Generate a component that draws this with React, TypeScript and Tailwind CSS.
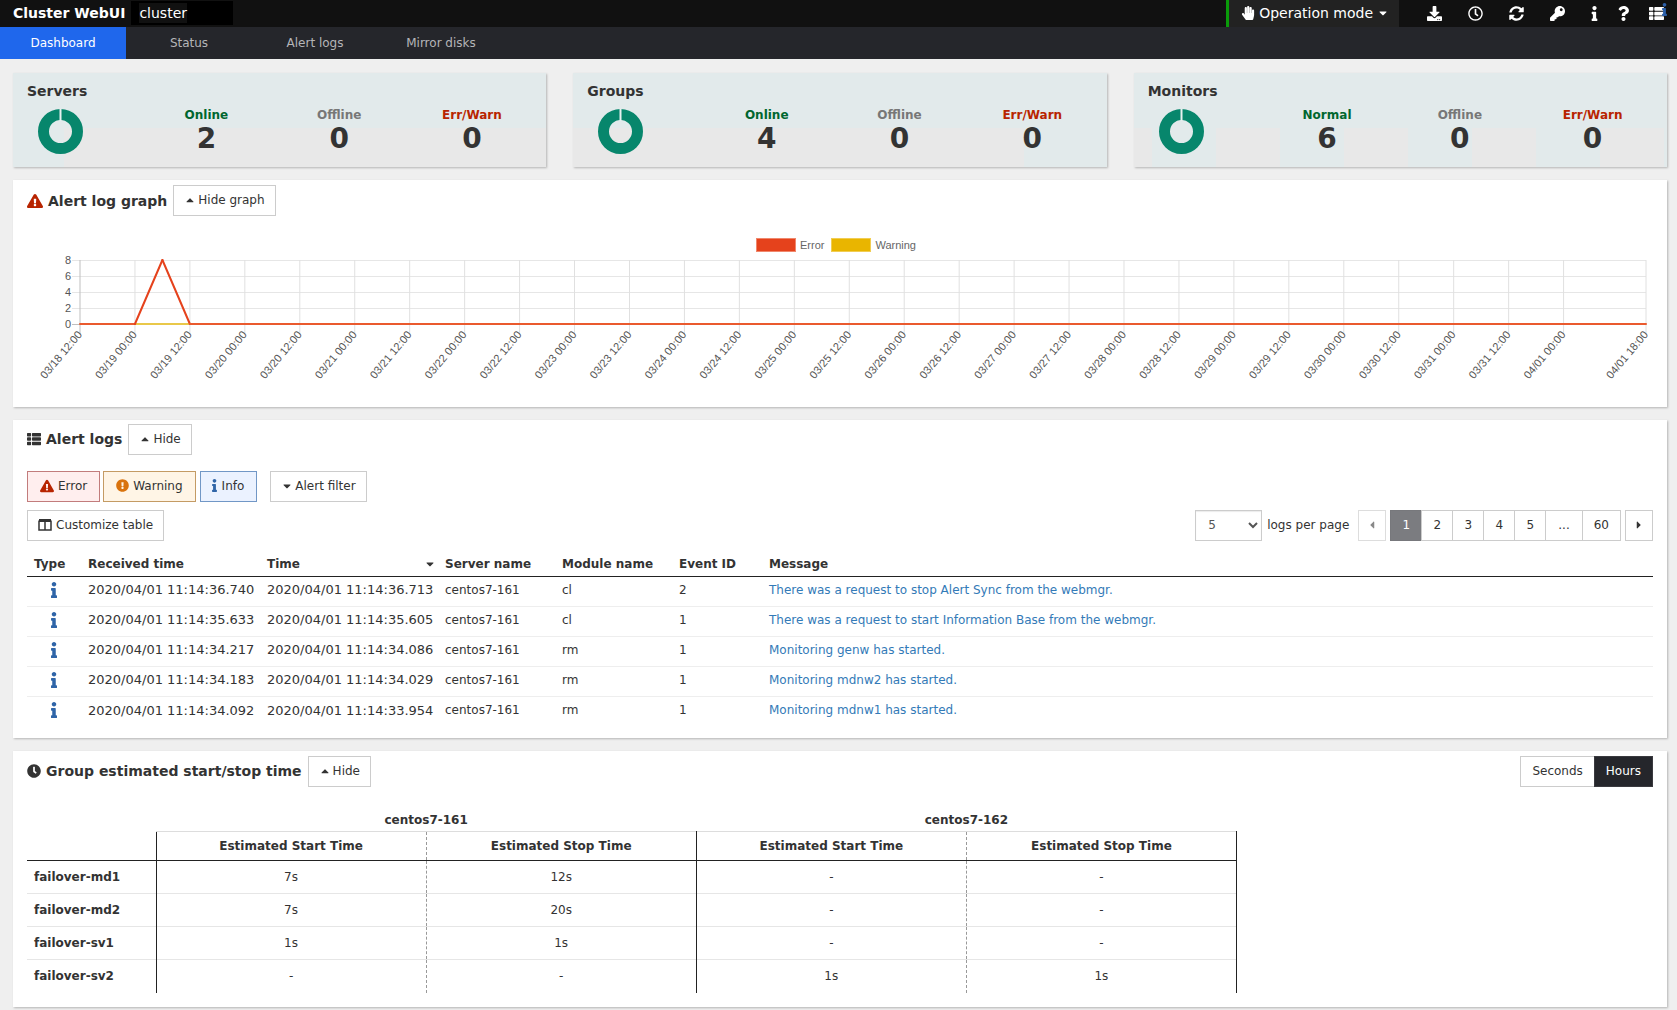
import type { ReactNode } from "react";
import {
  FaCaretDown,
  FaCaretLeft,
  FaCaretRight,
  FaCaretUp,
  FaClock,
  FaDownload,
  FaExclamationCircle,
  FaExclamationTriangle,
  FaHandPaper,
  FaInfo,
  FaKey,
  FaQuestion,
  FaRegClock,
  FaSyncAlt,
  FaThList,
} from "react-icons/fa";

type Stat = { label: string; value: number; tone: string };

type SummaryCardProps = {
  title: string;
  stats: ReadonlyArray<Stat>;
  surface: string;
};

type AlertRow = {
  received: string;
  time: string;
  server: string;
  module: string;
  eventId: number;
  message: string;
};

const tabs = ["Dashboard", "Status", "Alert logs", "Mirror disks"];

const summaries: SummaryCardProps[] = [
  {
    title: "Servers",
    surface:
      "bg-[#e2eaeb] bg-[linear-gradient(#e8e8e8,#e8e8e8)] bg-no-repeat bg-[position:51px_55px]",
    stats: [
      { label: "Online", value: 2, tone: "text-[#00662f]" },
      { label: "Offline", value: 0, tone: "text-[#777777]" },
      { label: "Err/Warn", value: 0, tone: "text-[#b82400]" },
    ],
  },
  {
    title: "Groups",
    surface:
      "bg-[#e2eaeb] bg-[linear-gradient(#e8e8e8,#e8e8e8)] bg-no-repeat bg-[position:-83px_55px]",
    stats: [
      { label: "Online", value: 4, tone: "text-[#00662f]" },
      { label: "Offline", value: 0, tone: "text-[#777777]" },
      { label: "Err/Warn", value: 0, tone: "text-[#b82400]" },
    ],
  },
  {
    title: "Monitors",
    surface:
      "bg-[#e2eaeb] bg-[linear-gradient(90deg,#e8e8e8_50%,transparent_50%)] bg-[size:128px_94px] bg-repeat-x bg-[position:82px_55px]",
    stats: [
      { label: "Normal", value: 6, tone: "text-[#00662f]" },
      { label: "Offline", value: 0, tone: "text-[#777777]" },
      { label: "Err/Warn", value: 0, tone: "text-[#b82400]" },
    ],
  },
];

// Position is counted in 12 hour steps from the first sample.
const timeTicks = [
  "03/18 12:00",
  "03/19 00:00",
  "03/19 12:00",
  "03/20 00:00",
  "03/20 12:00",
  "03/21 00:00",
  "03/21 12:00",
  "03/22 00:00",
  "03/22 12:00",
  "03/23 00:00",
  "03/23 12:00",
  "03/24 00:00",
  "03/24 12:00",
  "03/25 00:00",
  "03/25 12:00",
  "03/26 00:00",
  "03/26 12:00",
  "03/27 00:00",
  "03/27 12:00",
  "03/28 00:00",
  "03/28 12:00",
  "03/29 00:00",
  "03/29 12:00",
  "03/30 00:00",
  "03/30 12:00",
  "03/31 00:00",
  "03/31 12:00",
  "04/01 00:00",
].map((label, index) => ({ label, step: index }));
timeTicks.push({ label: "04/01 18:00", step: 28.5 });

const LAST_STEP = 28.5;
const PLOT_HEIGHT = 64;

const errorPoints = [
  [0, 0],
  [1, 0],
  [1.5, 8],
  [2, 0],
  [LAST_STEP, 0],
];

const alerts: AlertRow[] = [
  {
    received: "2020/04/01 11:14:36.740",
    time: "2020/04/01 11:14:36.713",
    server: "centos7-161",
    module: "cl",
    eventId: 2,
    message: "There was a request to stop Alert Sync from the webmgr.",
  },
  {
    received: "2020/04/01 11:14:35.633",
    time: "2020/04/01 11:14:35.605",
    server: "centos7-161",
    module: "cl",
    eventId: 1,
    message: "There was a request to start Information Base from the webmgr.",
  },
  {
    received: "2020/04/01 11:14:34.217",
    time: "2020/04/01 11:14:34.086",
    server: "centos7-161",
    module: "rm",
    eventId: 1,
    message: "Monitoring genw has started.",
  },
  {
    received: "2020/04/01 11:14:34.183",
    time: "2020/04/01 11:14:34.029",
    server: "centos7-161",
    module: "rm",
    eventId: 1,
    message: "Monitoring mdnw2 has started.",
  },
  {
    received: "2020/04/01 11:14:34.092",
    time: "2020/04/01 11:14:33.954",
    server: "centos7-161",
    module: "rm",
    eventId: 1,
    message: "Monitoring mdnw1 has started.",
  },
];

const estimates = [
  { group: "failover-md1", times: ["7s", "12s", "-", "-"] },
  { group: "failover-md2", times: ["7s", "20s", "-", "-"] },
  { group: "failover-sv1", times: ["1s", "1s", "-", "-"] },
  { group: "failover-sv2", times: ["-", "-", "1s", "1s"] },
];

const pages = ["2", "3", "4", "5"];

function stepX(step: number) {
  return `${(step / LAST_STEP) * 100}%`;
}

function valueY(value: number) {
  return PLOT_HEIGHT - (value / 8) * PLOT_HEIGHT;
}

function Header() {
  return (
    <header className="flex h-[27px] items-center justify-between bg-[#111111] text-sm text-white">
      <div className="flex items-center pb-px">
        <h1 className="ml-[13px] font-bold">Cluster WebUI</h1>
        <div className="ml-[6px] flex h-6 items-center bg-black pl-2">
          <span className="bg-[#111111]">cluster</span>
          <span className="w-[46px]" />
        </div>
      </div>
      <div className="flex h-full items-center">
        <button
          type="button"
          className="mr-4 flex h-full items-center border-l-[3px] border-[#0a9b0a] bg-[#222222] pr-[10px] pb-px pl-3"
        >
          <FaHandPaper className="mr-1 size-[14px]" />
          Operation mode
          <FaCaretDown className="ml-1 size-3" />
        </button>
        <div className="flex items-center pr-2 pb-px">
          <div className="flex items-center gap-[26px] pr-[22px] pl-3">
            <button type="button" aria-label="Export">
              <FaDownload className="size-[15px]" />
            </button>
            <button type="button" aria-label="Time information">
              <FaRegClock className="size-[15px]" />
            </button>
            <button type="button" aria-label="Refresh">
              <FaSyncAlt className="size-[15px]" />
            </button>
            <button type="button" aria-label="Password">
              <FaKey className="size-[15px]" />
            </button>
          </div>
          <div className="flex items-center gap-[14px]">
            <button type="button" aria-label="Information">
              <FaInfo className="size-[15px]" />
            </button>
            <button type="button" aria-label="Help">
              <FaQuestion className="size-[15px]" />
            </button>
            <button type="button" aria-label="Notifications" className="relative pr-[5px] pl-1">
              <FaThList className="size-[15px]" />
              <FaInfo className="absolute -top-[3px] -right-[2px] size-[13px] text-[#2c5fa8]" />
            </button>
          </div>
        </div>
      </div>
    </header>
  );
}

function TabBar() {
  return (
    <nav className="flex h-8 bg-[#25262b] text-xs">
      {tabs.map((tab, index) => (
        <a
          key={tab}
          href="#"
          className={
            index === 0
              ? "flex w-[126px] items-center justify-center bg-[#1f67ec] pb-px text-white"
              : "flex w-[126px] items-center justify-center pb-px text-[#b5b5b8]"
          }
        >
          {tab}
        </a>
      ))}
    </nav>
  );
}

function SummaryCard({ title, stats, surface }: SummaryCardProps) {
  return (
    <section className={`h-[94px] flex-1 pt-2 pr-2 pl-[14px] shadow-[1px_1px_2px_#b5b5b5] ${surface}`}>
      <h2 className="text-sm leading-5 font-bold">{title}</h2>
      <div className="flex">
        <div className="w-[113px] pt-2 pl-[11px]">
          <svg className="size-[45px]" viewBox="0 0 45 45">
            <circle cx="22.5" cy="22.5" r="17" fill="none" stroke="#07866c" strokeWidth="11" />
            <path d="M22.5 0v12" stroke="#e8f0f0" strokeWidth="2" />
          </svg>
        </div>
        {stats.map((stat) => (
          <div key={stat.label} className="flex-1 pt-1 text-center font-bold">
            <p className={`text-xs leading-5 ${stat.tone}`}>{stat.label}</p>
            <p className="text-[28px] leading-7">{stat.value}</p>
          </div>
        ))}
      </div>
    </section>
  );
}

function Panel({ children }: { children: ReactNode }) {
  return <section className="bg-white px-[14px] shadow-[1px_1px_2px_#b5b5b5]">{children}</section>;
}

function PlainButton({ children }: { children: ReactNode }) {
  return (
    <button type="button" className="flex h-[31px] items-center border border-[#cccccc] bg-white px-[10px] pb-px text-xs">
      {children}
    </button>
  );
}

function AlertGraph() {
  return (
    <div className="font-['Liberation_Sans',Arial,sans-serif] text-[11px] text-[#666666]">
      <div className="flex justify-center gap-[7px] pt-[21px] pr-2">
        <span className="flex items-center gap-1">
          <i className="h-[14px] w-10 border border-[#f0876c] bg-[#e5421c]" />
          Error
        </span>
        <span className="flex items-center gap-1">
          <i className="h-[14px] w-10 border border-[#f1cd52] bg-[#e9b500]" />
          Warning
        </span>
      </div>
      <div className="pt-[6px] pr-[7px] pl-[53px]">
        <svg className="block h-[147px] w-full overflow-visible" role="img" aria-label="Alert log graph">
          {[0, 2, 4, 6, 8].map((value) => (
            <svg key={value} y={valueY(value)} className="overflow-visible">
              <line x1="-8" x2="100%" y1="0.5" y2="0.5" stroke={value === 0 ? "#bfbfbf" : "#e6e6e6"} />
              <text x="-9" y="4" textAnchor="end" fill="#555555">
                {value}
              </text>
            </svg>
          ))}
          {timeTicks.map((tick) => (
            <svg key={tick.label} x={stepX(tick.step)} className="overflow-visible">
              <line x1="0" x2="0" y1="0" y2="74" stroke={tick.step === 0 ? "#bfbfbf" : "#e0e0e0"} />
              <text transform="translate(-2 71) rotate(-50)" textAnchor="end" x="0" y="6" fill="#555555">
                {tick.label}
              </text>
            </svg>
          ))}
          <line x1="0" x2="100%" y1={PLOT_HEIGHT} y2={PLOT_HEIGHT} stroke="#e9c84a" strokeWidth="2" />
          {errorPoints.slice(1).map(([step, value], index) => (
            <line
              key={step}
              x1={stepX(errorPoints[index][0])}
              y1={valueY(errorPoints[index][1])}
              x2={stepX(step)}
              y2={valueY(value)}
              stroke={value === errorPoints[index][1] ? "#ea5a2e" : "#e5421c"}
              strokeWidth="2"
              strokeLinecap="round"
            />
          ))}
        </svg>
      </div>
    </div>
  );
}

function Pagination() {
  return (
    <div className="flex items-center text-xs">
      <select
        id="page-size"
        defaultValue="5"
        className="h-[31px] w-[67px] border border-[#cccccc] bg-white pl-2 text-[#555555] shadow-[inset_0_1px_1px_#ececec]"
      >
        <option value="5">5</option>
        <option value="10">10</option>
      </select>
      <label htmlFor="page-size" className="mr-[9px] ml-[5px]">
        logs per page
      </label>
      <button
        type="button"
        disabled
        aria-label="Previous page"
        className="mr-1 flex h-[31px] w-7 items-center justify-center border border-[#dddddd] text-[#888888]"
      >
        <FaCaretLeft />
      </button>
      <button type="button" aria-current="page" className="h-[31px] w-8 border border-[#77787c] bg-[#7b7c80] text-white">
        1
      </button>
      {pages.map((page) => (
        <button key={page} type="button" className="-ml-px h-[31px] w-8 border border-[#cccccc]">
          {page}
        </button>
      ))}
      <button type="button" className="-ml-px h-[31px] border border-[#cccccc] px-3">
        ...
      </button>
      <button type="button" className="-ml-px h-[31px] border border-[#cccccc] px-[11px]">
        60
      </button>
      <button
        type="button"
        aria-label="Next page"
        className="ml-1 flex h-[31px] w-7 items-center justify-center border border-[#cccccc]"
      >
        <FaCaretRight />
      </button>
    </div>
  );
}

function AlertTable() {
  return (
    <table className="mt-[9px] w-full table-fixed border-collapse text-left text-xs">
      <colgroup>
        <col className="w-[54px]" />
        <col className="w-[179px]" />
        <col className="w-[178px]" />
        <col className="w-[117px]" />
        <col className="w-[117px]" />
        <col className="w-[90px]" />
        <col />
      </colgroup>
      <thead>
        <tr className="h-[27px] border-b border-[#222222] *:pt-[3px]">
          <th className="px-[7px]">Type</th>
          <th className="px-[7px]">Received time</th>
          <th className="pr-[2px] pl-[7px]">
            <span className="flex items-center justify-between">
              Time
              <FaCaretDown />
            </span>
          </th>
          <th className="px-[7px]">Server name</th>
          <th className="px-[7px]">Module name</th>
          <th className="px-[7px]">Event ID</th>
          <th className="px-[7px]">Message</th>
        </tr>
      </thead>
      <tbody>
        {alerts.map((alert) => (
          <tr key={alert.received} className="h-[30px] border-b border-[#eeeeee] *:pb-[3px] last:border-b-0">
            <td>
              <FaInfo title="Info" className="mx-auto size-4 text-[#2f65a8]" />
            </td>
            <td className="pl-[7px] text-[13px] whitespace-nowrap">{alert.received}</td>
            <td className="pl-[7px] text-[13px] whitespace-nowrap">{alert.time}</td>
            <td className="px-[7px]">{alert.server}</td>
            <td className="px-[7px]">{alert.module}</td>
            <td className="px-[7px]">{alert.eventId}</td>
            <td className="px-[7px]">
              <a href="#" className="text-[#337ab7]">
                {alert.message}
              </a>
            </td>
          </tr>
        ))}
      </tbody>
    </table>
  );
}

function EstimateTable() {
  return (
    <table className="mt-[23px] w-[1210px] max-w-full table-fixed border-collapse text-center text-xs">
      <colgroup>
        <col className="w-[129px]" />
        <col />
        <col />
        <col />
        <col />
      </colgroup>
      <thead>
        <tr className="h-[22px]">
          <td />
          <th colSpan={2}>centos7-161</th>
          <th colSpan={2}>centos7-162</th>
        </tr>
        <tr className="h-[29px] border-b border-[#222222]">
          <td />
          {[0, 1].map((server) => [
            <th key={`start-${server}`} className="border-t border-l border-t-[#dddddd] border-l-[#222222]">
              Estimated Start Time
            </th>,
            <th
              key={`stop-${server}`}
              className="border-t border-r border-l border-t-[#dddddd] border-r-[#222222] border-l-[#999999] [border-left-style:dashed]"
            >
              Estimated Stop Time
            </th>,
          ])}
        </tr>
      </thead>
      <tbody>
        {estimates.map((row) => (
          <tr key={row.group} className="h-[33px] border-b border-[#e6e6e6] last:border-b-0">
            <th className="px-[7px] text-left">{row.group}</th>
            {row.times.map((time, index) => (
              <td
                key={index}
                className={
                  index % 2 === 0
                    ? "border-l border-l-[#222222]"
                    : "border-r border-l border-r-[#222222] border-l-[#999999] [border-left-style:dashed]"
                }
              >
                {time}
              </td>
            ))}
          </tr>
        ))}
      </tbody>
    </table>
  );
}

export default function App() {
  return (
    <div className="min-h-screen bg-[#efefef] font-['DejaVu_Sans',Verdana,sans-serif] text-[#333333]">
      <Header />
      <TabBar />
      <main className="flex flex-col gap-[13px] pt-[14px] pr-[10px] pl-[13px]">
        <div className="flex gap-[27px]">
          {summaries.map((summary) => (
            <SummaryCard key={summary.title} {...summary} />
          ))}
        </div>

        <Panel>
          <div className="flex items-center pt-[5px]">
            <FaExclamationTriangle className="mr-[5px] size-4 text-[#b82400]" />
            <h2 className="mr-[6px] text-sm font-bold">Alert log graph</h2>
            <PlainButton>
              <FaCaretUp className="mr-[2px]" />
              Hide graph
            </PlainButton>
          </div>
          <AlertGraph />
        </Panel>

        <Panel>
          <div className="flex items-center pt-1">
            <FaThList className="mr-[5px] size-[14px]" />
            <h2 className="mr-[6px] text-sm font-bold">Alert logs</h2>
            <PlainButton>
              <FaCaretUp className="mr-[2px]" />
              Hide
            </PlainButton>
          </div>
          <div className="flex pt-4 text-xs">
            <button
              type="button"
              className="mr-[3px] flex h-[31px] items-center gap-1 border border-[#c27c7c] bg-[#ffeeee] px-3 pb-px"
            >
              <FaExclamationTriangle className="size-[14px] text-[#b82400]" />
              Error
            </button>
            <button
              type="button"
              className="mr-1 flex h-[31px] items-center gap-1 border border-[#c49b64] bg-[#fff5e6] px-3 pb-px"
            >
              <FaExclamationCircle className="size-[13px] text-[#d9730d]" />
              Warning
            </button>
            <button
              type="button"
              className="mr-[13px] flex h-[31px] items-center gap-px border border-[#7197c6] bg-[#ebf2ff] pr-3 pb-px pl-[7px]"
            >
              <FaInfo className="size-[13px] text-[#2f65a8]" />
              Info
            </button>
            <PlainButton>
              <FaCaretDown className="mr-[2px]" />
              Alert filter
            </PlainButton>
          </div>
          <div className="flex items-center justify-between pt-2">
            <PlainButton>
              <svg className="mr-1 size-[14px]" viewBox="0 0 14 14" fill="none" stroke="currentColor">
                <path d="M1 2.5h12" strokeWidth="3" />
                <path d="M1 2.5v9.5h12V2.5M7 3v9" strokeWidth="1.5" />
              </svg>
              Customize table
            </PlainButton>
            <Pagination />
          </div>
          <AlertTable />
          <div className="h-[11px]" />
        </Panel>

        <Panel>
          <div className="flex items-center justify-between pt-[5px]">
            <div className="flex items-center">
              <FaClock className="mr-[5px] size-[14px]" />
              <h2 className="mr-[6px] text-sm font-bold">Group estimated start/stop time</h2>
              <PlainButton>
                <FaCaretUp className="mr-[2px]" />
                Hide
              </PlainButton>
            </div>
            <div className="flex text-xs">
              <button type="button" className="h-[31px] border border-r-0 border-[#cccccc] px-[11px] pb-px">
                Seconds
              </button>
              <button type="button" className="h-[31px] border border-[#3a3a3f] bg-[#25262b] px-[11px] pb-px text-white">
                Hours
              </button>
            </div>
          </div>
          <EstimateTable />
          <div className="h-[14px]" />
        </Panel>
      </main>
    </div>
  );
}
